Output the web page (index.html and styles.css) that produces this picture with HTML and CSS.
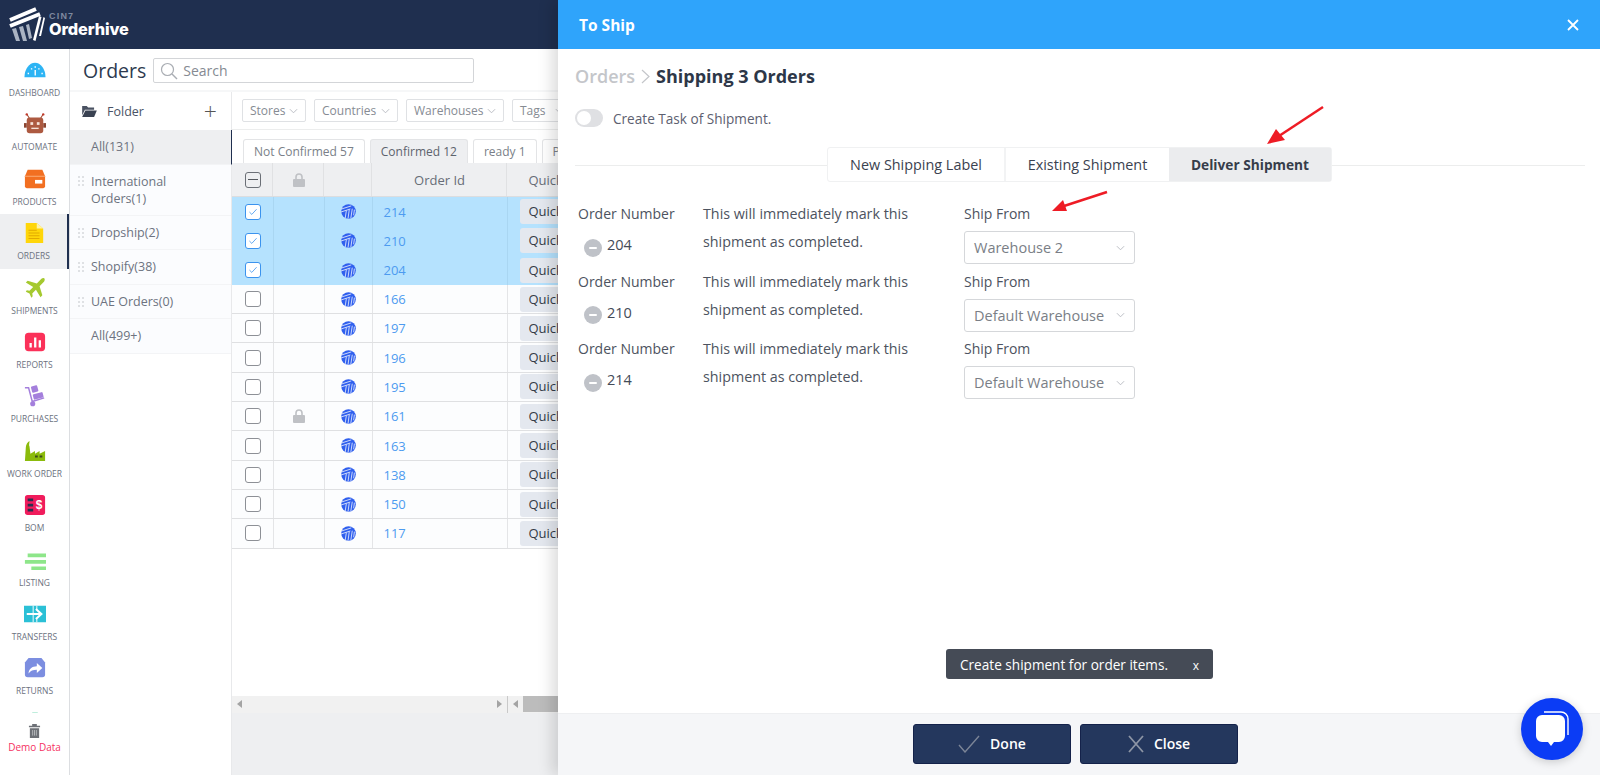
FILE: index.html
```html
<!DOCTYPE html>
<html lang="en">
<head>
<meta charset="utf-8">
<title>Orderhive - To Ship</title>
<link rel="stylesheet" href="styles.css">
</head>
<body>
<svg class="defs" width="0" height="0" aria-hidden="true">
  <symbol id="stripe" viewBox="0 0 16 16">
    <circle cx="8" cy="8" r="7.8" fill="#2f5fee"/>
    <path d="M0 5.500 11 2M0 8.500l10-3.200M4.500 15l1.200-8M7.500 15.500l1.300-9.500M10.500 15l1.500-10M13.500 12l.8-6" fill="none" stroke="#fff" stroke-width=".8"/>
  </symbol>
  <symbol id="chev" viewBox="0 0 10 6"><path d="M1 1l4 4 4-4" fill="none" stroke="#b4b8be" stroke-width="1"/></symbol>
  <symbol id="minus" viewBox="0 0 18 18"><circle cx="9" cy="9" r="9" fill="#bfc2c8"/><rect x="5" y="8" width="8" height="2" rx="1" fill="#fff"/></symbol>
  <symbol id="dots" viewBox="0 0 7 11"><path d="M0 0h2v2H0zM4 0h2v2H4zM0 4h2v2H0zM4 4h2v2H4zM0 8h2v2H0zM4 8h2v2H4z" fill="#dfe1e4"/></symbol>
  <symbol id="tick" viewBox="0 0 12 10"><path d="M1.500 5l3 3 6-6.500" fill="none" stroke="#3b93ee" stroke-width="1"/></symbol>
</svg>

<div class="app">
  <header class="topbar">
    <svg class="logo" viewBox="0 0 36 36" width="36" height="36">
      <path d="M1 13 27 2M1 19 31 7" stroke="#fff" stroke-width="4" fill="none"/>
      <path d="M3 22l4 12h4L7 21zM10 20l4 14h4l-4-15zM17 18l3 14 3-1-3-14z" fill="#aab3c2"/>
      <path d="M24 33 30 9l2.500 1-6 24zM30 29l4.500-19 1.500 1-4 18z" fill="#fff"/>
    </svg>
    <div class="brand"><span class="brand-small">CIN7</span><span class="brand-big">Orderhive</span></div>
  </header>

  <div class="body">
    <nav class="sidebar">
      <div class="nav-scroll">
        <a class="nav-item"><svg viewBox="0 0 24 24" class="nav-icon"><path d="M.5 20A11.500 16 0 0 1 23.500 20z" fill="#2db4f4"/><path d="M4 15h1.500v1.500H4zM7.500 10h1.500v1.500H7.500zM11.500 8H13v1.500h-1.500zM15.500 10H17v1.500h-1.500zM19 15h1.500v1.500H19zM11.500 12H13v6h-1.500z" fill="#fff"/></svg><span>Dashboard</span></a>
        <a class="nav-item"><svg viewBox="0 0 24 24" class="nav-icon"><path d="M6 6 3 1M18 6l3-5" stroke="#a8523a" stroke-width="1.200"/><circle cx="3" cy="1.500" r="1.300" fill="#c0392b"/><circle cx="21" cy="1.500" r="1.300" fill="#c0392b"/><rect x="3" y="5" width="18" height="17" rx="3" fill="#ad5a41"/><rect x="0" y="11" width="3" height="5" fill="#8c4632"/><rect x="21" y="11" width="3" height="5" fill="#8c4632"/><rect x="7" y="10" width="3" height="3" fill="#f6e3da"/><rect x="14" y="10" width="3" height="3" fill="#f6e3da"/><rect x="8" y="16" width="8" height="1.500" fill="#f6e3da"/></svg><span>Automate</span></a>
        <a class="nav-item"><svg viewBox="0 0 24 24" class="nav-icon"><path d="M4 2h16l3 7v11a2 2 0 0 1-2 2H3a2 2 0 0 1-2-2V9z" fill="#f26f21"/><path d="M1 9h22" stroke="#fbb27f" stroke-width="1"/><rect x="12" y="13" width="8" height="4" fill="#fff"/></svg><span>Products</span></a>
        <a class="nav-item nav-item-active"><svg viewBox="0 0 24 24" class="nav-icon"><path d="M3 1h12l7 6v16H3z" fill="#ffd60a"/><path d="M15 1v6h7z" fill="#fff3a8"/><path d="M6 9h9M6 12h12M6 15h12M6 18h12" stroke="#e2a900" stroke-width="1.200"/></svg><span>Orders</span></a>
        <a class="nav-item"><svg viewBox="0 0 24 24" class="nav-icon"><path d="M21 1c2 0 2 2 1 4l-5 5 3 10-2 2-5-8-4 4 .5 3-1.500 1.500-2-4.500-4-2L3 14.500l3 .5 4-4-8-5 2-2 10 3 5-5c.8-.7 1.300-1 2-1z" fill="#a5c92f"/></svg><span>Shipments</span></a>
        <a class="nav-item"><svg viewBox="0 0 24 24" class="nav-icon"><rect x="1" y="2" width="22" height="20" rx="4" fill="#fb3159"/><path d="M6 13h2.500v5H6zM11 7h2.500v11H11zM16 10h2.500v8H16z" fill="#fff"/></svg><span>Reports</span></a>
        <a class="nav-item"><svg viewBox="0 0 24 24" class="nav-icon"><path d="M1 3h4l4 15 13-4" fill="none" stroke="#a47fdc" stroke-width="1.600"/><rect x="8" y="1" width="7" height="7" rx="1" transform="rotate(-15 11 4)" fill="#a47fdc"/><rect x="10" y="9" width="11" height="6" rx="1" transform="rotate(-15 15 12)" fill="#a47fdc"/><circle cx="9.500" cy="20.500" r="2.800" fill="#a47fdc"/></svg><span>Purchases</span></a>
        <a class="nav-item"><svg viewBox="0 0 24 24" class="nav-icon"><path d="M1 23 2 8c0-3 2-6 4-7 0 3-1 4 0 6l1 8 5-3v3l5-3v3l6-3v11z" fill="#8bbb0c"/><path d="M12 17h3v2h-3zM17 17h3v2h-3z" fill="#3c4d1c"/></svg><span>Work Order</span></a>
        <a class="nav-item"><svg viewBox="0 0 24 24" class="nav-icon"><rect x="1" y="1" width="22" height="22" rx="3" fill="#f01c5c"/><path d="M4 5h6v3H4zM4 10.500h6v3H4zM4 16h6v3H4z" fill="#2a2f4f"/><text x="16.500" y="16.500" class="bom-sign">$</text></svg><span>BOM</span></a>
        <a class="nav-item"><svg viewBox="0 0 24 24" class="nav-icon"><path d="M4 5h20v4H4zM1 12h23v4H1zM8 19h16v4H8z" fill="#8ee68a"/></svg><span>Listing</span></a>
        <a class="nav-item"><svg viewBox="0 0 24 24" class="nav-icon"><rect y="3" width="24" height="18" fill="#2bc0d6"/><path d="M10 3v18M14 3v4M14 17v4" stroke="#fff" stroke-width="1"/><path d="M3 12h15M13 6.500l6 5.500-6 5.500" fill="none" stroke="#fff" stroke-width="2.200"/></svg><span>Transfers</span></a>
        <a class="nav-item"><svg viewBox="0 0 24 24" class="nav-icon"><path d="M5 1h14l4 5v13a3 3 0 0 1-3 3H4a3 3 0 0 1-3-3V6z" fill="#7c8ee0"/><path d="M5 18c0-5 4-8 9-8V6.500l6 5.500-6 5.500V14c-4 0-7 1-9 4z" fill="#fff"/></svg><span>Returns</span></a>
        <a class="nav-item"><svg viewBox="0 0 24 24" class="nav-icon"><path d="M9 0h6v24H9z" fill="#bfeedd"/></svg></a>
      </div>
      <a class="demo">
        <svg viewBox="0 0 14 16" width="13" height="15"><path d="M1 3h12v1.500H1zM4.500 1h5v2h-5zM2 5.500h10V16H2z" fill="#6d7076"/><path d="M5 7.500v6M7 7.500v6M9 7.500v6" stroke="#c8cacd" stroke-width=".8"/></svg>
        <span>Demo Data</span>
      </a>
    </nav>

    <main class="main">
      <div class="page-head">
        <h1>Orders</h1>
        <div class="search">
          <svg viewBox="0 0 18 18" width="18" height="18"><circle cx="7.500" cy="7.500" r="6" fill="none" stroke="#a9adb3" stroke-width="1.200"/><path d="M12 12l5 5" stroke="#a9adb3" stroke-width="1.400"/></svg>
          <span>Search</span>
        </div>
      </div>
      <div class="workspace">
        <aside class="folders">
          <div class="folder-head">
            <svg viewBox="0 0 16 12" width="15" height="11"><path d="M0 0h5l1.500 1.500H13V4H3L0 10z" fill="#4a5262"/><path d="M3.500 5H16l-3 7H0z" fill="#3a4252"/></svg>
            <span class="folder-title">Folder</span>
            <span class="folder-add">+</span>
          </div>
          <div class="folder folder-active">All(131)</div>
          <div class="folder folder-tall"><svg class="grip"><use href="#dots"/></svg>International Orders(1)</div>
          <div class="folder"><svg class="grip"><use href="#dots"/></svg>Dropship(2)</div>
          <div class="folder"><svg class="grip"><use href="#dots"/></svg>Shopify(38)</div>
          <div class="folder"><svg class="grip"><use href="#dots"/></svg>UAE Orders(0)</div>
          <div class="folder">All(499+)</div>
        </aside>
        <section class="content">
          <div class="filters">
            <span class="filter filter-stores">Stores<svg class="chev"><use href="#chev"/></svg></span>
            <span class="filter filter-countries">Countries<svg class="chev"><use href="#chev"/></svg></span>
            <span class="filter filter-warehouses">Warehouses<svg class="chev"><use href="#chev"/></svg></span>
            <span class="filter filter-tags">Tags<svg class="chev"><use href="#chev"/></svg></span>
          </div>
          <div class="status-tabs">
            <span class="status-tab">Not Confirmed 57</span>
            <span class="status-tab status-tab-active">Confirmed 12</span>
            <span class="status-tab">ready 1</span>
            <span class="status-tab status-tab-cut">P</span>
          </div>
          <div class="grid">
            <div class="row row-head">
              <div class="cell c-check"><span class="box box-mixed"></span></div>
              <div class="cell c-lock"><svg viewBox="0 0 12 14" width="12" height="14"><path d="M3 6V4a3 3 0 0 1 6 0v2" fill="none" stroke="#bfc1c5" stroke-width="1.600"/><rect y="6" width="12" height="8" rx="1" fill="#bfc1c5"/></svg></div>
              <div class="cell c-chan"></div>
              <div class="cell c-id">Order Id</div>
              <div class="cell c-quick">Quick</div>
            </div>
            <div class="row row-sel"><div class="cell c-check"><span class="box box-on"><svg class="tick"><use href="#tick"/></svg></span></div><div class="cell c-lock"></div><div class="cell c-chan"><svg class="chan"><use href="#stripe"/></svg></div><div class="cell c-id c-link">214</div><div class="cell c-quick"><span class="quick">Quick</span></div></div>
            <div class="row row-sel"><div class="cell c-check"><span class="box box-on"><svg class="tick"><use href="#tick"/></svg></span></div><div class="cell c-lock"></div><div class="cell c-chan"><svg class="chan"><use href="#stripe"/></svg></div><div class="cell c-id c-link">210</div><div class="cell c-quick"><span class="quick">Quick</span></div></div>
            <div class="row row-sel"><div class="cell c-check"><span class="box box-on"><svg class="tick"><use href="#tick"/></svg></span></div><div class="cell c-lock"></div><div class="cell c-chan"><svg class="chan"><use href="#stripe"/></svg></div><div class="cell c-id c-link">204</div><div class="cell c-quick"><span class="quick">Quick</span></div></div>
            <div class="row"><div class="cell c-check"><span class="box"></span></div><div class="cell c-lock"></div><div class="cell c-chan"><svg class="chan"><use href="#stripe"/></svg></div><div class="cell c-id c-link">166</div><div class="cell c-quick"><span class="quick">Quick</span></div></div>
            <div class="row"><div class="cell c-check"><span class="box"></span></div><div class="cell c-lock"></div><div class="cell c-chan"><svg class="chan"><use href="#stripe"/></svg></div><div class="cell c-id c-link">197</div><div class="cell c-quick"><span class="quick">Quick</span></div></div>
            <div class="row"><div class="cell c-check"><span class="box"></span></div><div class="cell c-lock"></div><div class="cell c-chan"><svg class="chan"><use href="#stripe"/></svg></div><div class="cell c-id c-link">196</div><div class="cell c-quick"><span class="quick">Quick</span></div></div>
            <div class="row"><div class="cell c-check"><span class="box"></span></div><div class="cell c-lock"></div><div class="cell c-chan"><svg class="chan"><use href="#stripe"/></svg></div><div class="cell c-id c-link">195</div><div class="cell c-quick"><span class="quick">Quick</span></div></div>
            <div class="row"><div class="cell c-check"><span class="box"></span></div><div class="cell c-lock"><svg viewBox="0 0 12 14" width="12" height="14"><path d="M3 6V4a3 3 0 0 1 6 0v2" fill="none" stroke="#bfc1c5" stroke-width="1.600"/><rect y="6" width="12" height="8" rx="1" fill="#bfc1c5"/></svg></div><div class="cell c-chan"><svg class="chan"><use href="#stripe"/></svg></div><div class="cell c-id c-link">161</div><div class="cell c-quick"><span class="quick">Quick</span></div></div>
            <div class="row"><div class="cell c-check"><span class="box"></span></div><div class="cell c-lock"></div><div class="cell c-chan"><svg class="chan"><use href="#stripe"/></svg></div><div class="cell c-id c-link">163</div><div class="cell c-quick"><span class="quick">Quick</span></div></div>
            <div class="row"><div class="cell c-check"><span class="box"></span></div><div class="cell c-lock"></div><div class="cell c-chan"><svg class="chan"><use href="#stripe"/></svg></div><div class="cell c-id c-link">138</div><div class="cell c-quick"><span class="quick">Quick</span></div></div>
            <div class="row"><div class="cell c-check"><span class="box"></span></div><div class="cell c-lock"></div><div class="cell c-chan"><svg class="chan"><use href="#stripe"/></svg></div><div class="cell c-id c-link">150</div><div class="cell c-quick"><span class="quick">Quick</span></div></div>
            <div class="row"><div class="cell c-check"><span class="box"></span></div><div class="cell c-lock"></div><div class="cell c-chan"><svg class="chan"><use href="#stripe"/></svg></div><div class="cell c-id c-link">117</div><div class="cell c-quick"><span class="quick">Quick</span></div></div>
          </div>
          <div class="grid-fill"></div>
          <div class="scrollbars">
            <div class="scroll scroll-left"><i class="arrow-l"></i><i class="arrow-r"></i></div>
            <div class="scroll scroll-right"><i class="arrow-l"></i><b class="thumb"></b></div>
          </div>
          <div class="content-foot"></div>
        </section>
      </div>
    </main>
  </div>
</div>

<aside class="panel">
  <header class="panel-head">
    <span>To Ship</span>
    <svg viewBox="0 0 12 12" width="12" height="12"><path d="M1 1l10 10M11 1 1 11" stroke="#fff" stroke-width="1.800"/></svg>
  </header>
  <div class="panel-body">
    <div class="crumbs">
      <span class="crumb-dim">Orders</span>
      <svg viewBox="0 0 9 15" width="9" height="15"><path d="M1 1l7 6.500L1 14" fill="none" stroke="#c4c6ca" stroke-width="1.200"/></svg>
      <span class="crumb-now">Shipping 3 Orders</span>
    </div>
    <div class="task"><span class="toggle"></span><span>Create Task of Shipment.</span></div>
    <div class="tabs-wrap">
      <div class="tabs">
        <span class="tab tab-1">New Shipping Label</span>
        <span class="tab tab-2">Existing Shipment</span>
        <span class="tab tab-3">Deliver Shipment</span>
      </div>
    </div>
    <div class="ship-list">
      <div class="ship-row">
        <div class="ship-order"><div>Order Number</div><div class="ship-num"><svg class="minus"><use href="#minus"/></svg>204</div></div>
        <div class="ship-note">This will immediately mark this shipment as completed.</div>
        <div class="ship-from"><div>Ship From</div><div class="select">Warehouse 2<svg class="chev"><use href="#chev"/></svg></div></div>
      </div>
      <div class="ship-row">
        <div class="ship-order"><div>Order Number</div><div class="ship-num"><svg class="minus"><use href="#minus"/></svg>210</div></div>
        <div class="ship-note">This will immediately mark this shipment as completed.</div>
        <div class="ship-from"><div>Ship From</div><div class="select">Default Warehouse<svg class="chev"><use href="#chev"/></svg></div></div>
      </div>
      <div class="ship-row">
        <div class="ship-order"><div>Order Number</div><div class="ship-num"><svg class="minus"><use href="#minus"/></svg>214</div></div>
        <div class="ship-note">This will immediately mark this shipment as completed.</div>
        <div class="ship-from"><div>Ship From</div><div class="select">Default Warehouse<svg class="chev"><use href="#chev"/></svg></div></div>
      </div>
    </div>
  </div>
  <footer class="panel-foot">
    <button class="btn"><svg viewBox="0 0 22 18" width="22" height="18"><path d="M1 10l6 7L21 1" fill="none" stroke="#7c8597" stroke-width="1.400"/></svg>Done</button>
    <button class="btn"><svg viewBox="0 0 16 18" width="16" height="18"><path d="M1 1l14 16M15 1 1 17" fill="none" stroke="#8d95a5" stroke-width="1.800"/></svg>Close</button>
  </footer>
  <div class="toast"><span>Create shipment for order items.</span><span class="toast-x">x</span></div>
</aside>

<svg class="arrow arrow-tab" viewBox="0 0 60 42" width="60" height="42"><path d="M58 2 14 31" stroke="#ee1c25" stroke-width="2.500"/><path d="M2 39l9-15 9 11z" fill="#ee1c25"/></svg>
<svg class="arrow arrow-from" viewBox="0 0 60 24" width="60" height="24"><path d="M57 2 14 16" stroke="#ee1c25" stroke-width="2.500"/><path d="M2 21l11-11 4 11z" fill="#ee1c25"/></svg>

<button class="chat" aria-label="Chat">
  <svg viewBox="0 0 34 36" width="34" height="36"><path d="M9 1h17a7 7 0 0 1 7 7v16" fill="none" stroke="#fff" stroke-width="1.400"/><path d="M7 4h17a6 6 0 0 1 6 6v15a6 6 0 0 1-6 6h-5l-3 4-3-4H7a6 6 0 0 1-6-6V10a6 6 0 0 1 6-6z" fill="#fff"/></svg>
</button>
</body>
</html>
```

FILE: styles.css
```css
* { box-sizing: border-box; }
html, body { margin: 0; height: 100%; }
body {
  overflow: hidden;
  font-family: "Open Sans", "Noto Sans", sans-serif;
  font-size: 13px;
  color: #5d6472;
  background: #fff;
}
.defs { position: absolute; }
.app { display: flex; flex-direction: column; height: 775px; }

/* top bar */
.topbar {
  flex: 0 0 49px;
  display: flex;
  align-items: center;
  gap: 4px;
  padding-left: 9px;
  background: #1f2f4f;
}
.brand { display: flex; flex-direction: column; color: #fff; line-height: 1; }
.brand-small { font: 700 9px/9px "Liberation Sans", sans-serif; color: #7f8aa0; letter-spacing: 1.200px; }
.brand-big { font: 800 16.300px/17px "Inter", sans-serif; letter-spacing: -.1px; }

.body { flex: 1; display: flex; min-height: 0; }

/* sidebar */
.sidebar {
  flex: 0 0 70px;
  position: relative;
  border-right: 1px solid #dcdee1;
  display: flex;
  flex-direction: column;
}
.nav-scroll { flex: 0 0 664px; padding-top: 2px; overflow: hidden; }
.nav-item {
  display: flex;
  flex-direction: column;
  align-items: center;
  height: 54.400px;
  padding-top: 8px;
  font-size: 8.500px;
  line-height: 12px;
  text-transform: uppercase;
  color: #6c7280;
  white-space: nowrap;
}
.nav-icon { width: 22px; height: 22px; margin-bottom: 6px; flex: none; }
.nav-item-active { background: #eeeff1; border-right: 2px solid #1f2f4f; }
.bom-sign { font: 700 13px "Liberation Sans", sans-serif; fill: #fff; text-anchor: middle; }
.demo {
  display: flex;
  flex-direction: column;
  align-items: center;
  gap: 3px;
  padding-top: 10px;
  font-size: 10px;
  line-height: 13px;
  color: #f5315f;
}

/* main */
.main { flex: 1; display: flex; flex-direction: column; min-width: 0; }
.page-head {
  flex: 0 0 43px;
  display: flex;
  align-items: center;
  gap: 7px;
  padding: 2px 0 0 13px;
  border-bottom: 2px solid #f6f7f8;
}
.page-head h1 { margin: 0; font-size: 19.500px; font-weight: 400; color: #2d3a4f; }
.search {
  display: flex;
  align-items: center;
  gap: 5px;
  width: 321px;
  height: 25px;
  padding-left: 6px;
  border: 1px solid #d3d5d8;
  border-radius: 2px;
  font-size: 14px;
  color: #858a92;
}
.workspace { flex: 1; display: flex; min-height: 0; }

/* folders */
.folders { flex: 0 0 162px; border-right: 1px solid #e8e9eb; }
.folder-head {
  display: flex;
  align-items: center;
  height: 38px;
  padding: 0 14px 0 12px;
  color: #4a5466;
}
.folder-title { margin-left: 10px; flex: 1; font-size: 12.500px; }
.folder-add { font-size: 23px; font-weight: 300; line-height: 1; color: #555; }
.folder {
  position: relative;
  display: flex;
  align-items: center;
  height: 34.500px;
  padding: 0 10px 0 21px;
  background: #fbfcfe;
  border-bottom: 1px solid #f3f4f6;
  font-size: 12.500px;
  line-height: 17px;
  color: #6d7380;
}
.folder-tall { height: 51px; }
.folder-active { background: #eeeff1; border-right: 1px solid #1f2f4f; margin-right: -1px; }
.grip { position: absolute; left: 8px; top: 12px; width: 7px; height: 11px; }
.folder-tall .grip { top: 11px; }

/* content */
.content { flex: 1; min-width: 0; display: flex; flex-direction: column; overflow: hidden; }
.filters {
  flex: 0 0 38px;
  display: flex;
  align-items: center;
  gap: 8px;
  padding: 0 0 0 10px;
  border-bottom: 1px solid #eceded;
}
.filter {
  display: flex;
  align-items: center;
  justify-content: space-between;
  flex: none;
  height: 23px;
  padding: 0 7px;
  border: 1px solid #dfe1e4;
  border-radius: 2px;
  font-size: 12px;
  color: #868b93;
}
.filter-stores { width: 64px; }
.filter-countries { width: 84px; }
.filter-warehouses { width: 98px; }
.filter-tags { width: 60px; }
.chev { width: 9px; height: 6px; flex: none; }
.status-tabs {
  flex: 0 0 33px;
  display: flex;
  align-items: flex-end;
  gap: 5px;
  padding-left: 11px;
}
.status-tab {
  flex: none;
  height: 24px;
  padding: 0 10px;
  line-height: 24px;
  border: 1px solid #e3e4e6;
  border-bottom: 0;
  border-radius: 3px 3px 0 0;
  font-size: 12px;
  color: #7a7f88;
}
.status-tab-active { background: #eeeff1; color: #5d636d; }
.status-tab-cut { width: 60px; }

/* table */
.grid { flex: none; }
.row { display: flex; height: 29.300px; border-bottom: 1px solid #dfe0e2; background: #fcfdfe; }
.row-head { height: 34px; background: #eeeff1; border-bottom: 1px solid #dcdddf; color: #676d77; }
.row-sel { background: #b5e2fe; border-bottom: 0; }
.cell { flex: none; display: flex; align-items: center; border-right: 1px solid #e4e5e7; }
.row-sel .cell { border-right-color: #a9d6f2; }
.row-head .cell { justify-content: center; border-right-color: transparent; box-shadow: inset -1px 0 0 0 #e0e1e3; }
.c-check { width: 41.500px; padding-left: 13px; justify-content: flex-start !important; }
.c-lock { width: 51px; justify-content: center; }
.c-chan { width: 48px; justify-content: center; }
.c-id { width: 135px; font-size: 13px; }
.c-link { padding-left: 11px; color: #4d9bf0; }
.c-quick { width: 300px; padding-left: 12px; border-right: 0; justify-content: flex-start !important; white-space: nowrap; box-shadow: none !important; }
.row-head .c-quick { padding-left: 21px; }
.quick { display: block; height: 25px; width: 120px; padding-left: 9px; line-height: 25px; background: #e4e8ef; border-radius: 3px; color: #333b47; }
.box {
  display: flex;
  align-items: center;
  justify-content: center;
  width: 16px;
  height: 16px;
  border: 1px solid #8d9096;
  border-radius: 3px;
  background: #fff;
}
.box-on { border-color: #3b93ee; }
.box-mixed { background: transparent; border-color: #6b6f76; }
.box-mixed::before { content: ""; width: 10px; height: 1px; background: #55595f; }
.tick { width: 10px; height: 8px; }
.chan { width: 15px; height: 15px; }
.grid-fill { flex: 0 0 147px; }
.scrollbars { flex: 0 0 17px; display: flex; background: #f1f1f1; }
.scroll { display: flex; align-items: center; justify-content: space-between; padding: 0 5px; }
.scroll-left { width: 276px; border-right: 1px solid #c9c9c9; }
.scroll-right { flex: 1; justify-content: flex-start; gap: 5px; }
.arrow-l { border: 4px solid transparent; border-right: 5px solid #a4a4a4; border-left: 0; }
.arrow-r { border: 4px solid transparent; border-left: 5px solid #a4a4a4; border-right: 0; }
.thumb { width: 60px; height: 16px; background: #bcbcbc; }
.content-foot { flex: 1; background: #eeeff1; }

/* slide-over panel */
.panel {
  position: absolute;
  top: 0; right: 0; bottom: 0;
  left: 558px;
  display: flex;
  flex-direction: column;
  background: #fff;
  box-shadow: -6px 0 14px rgba(0, 0, 0, .14);
}
.panel-head {
  flex: 0 0 49px;
  display: flex;
  align-items: center;
  justify-content: space-between;
  padding: 0 21px;
  background: #2fa4fb;
  color: #fff;
  font-size: 15.500px;
  font-weight: 700;
}
.panel-body { flex: 1; padding: 0 15px 0 17px; color: #4d5360; font-size: 14px; }
.crumbs { display: flex; align-items: center; gap: 6px; height: 54px; font-size: 18px; font-weight: 600; }
.crumb-dim { color: #c4c6ca; }
.crumb-now { font-weight: 700; color: #2d3748; }
.task { display: flex; align-items: center; gap: 10px; height: 30px; font-size: 13.600px; color: #5d6070; }
.toggle {
  position: relative;
  width: 28px;
  height: 18px;
  border-radius: 9px;
  background: #dfe0e3;
}
.toggle::before {
  content: "";
  position: absolute;
  left: 2px; top: 2px;
  width: 14px; height: 14px;
  border-radius: 50%;
  background: #fff;
}
.tabs-wrap {
  position: relative;
  display: flex;
  justify-content: flex-start;
  margin-top: 14px;
  padding-left: 252px;
}
.tabs-wrap::before {
  content: "";
  position: absolute;
  left: 0; right: 0; top: 18px;
  height: 1px;
  background: #eceded;
}
.tabs {
  position: relative;
  display: flex;
  height: 35px;
  background: #fff;
  border: 1px solid #f0f1f2;
  border-radius: 3px;
  font-size: 14.400px;
  color: #3b4250;
}
.tab { display: flex; align-items: center; justify-content: center; white-space: nowrap; }
.tab-1 { width: 178px; border-right: 2px solid #f2f3f4; }
.tab-2 { width: 163px; }
.tab-3 { width: 162px; background: #ebecee; font-size: 13.700px; font-weight: 700; color: #363d4a; }
.ship-list { padding: 16px 0 0 3px; }
.ship-row { display: flex; height: 67.500px; }
.ship-order { flex: 0 0 125px; }
.ship-order > div:first-child, .ship-from > div:first-child { height: 31px; line-height: 31px; }
.ship-num { display: flex; align-items: center; gap: 5px; padding-left: 6px; height: 31px; font-size: 14.500px; color: #444b58; }
.minus { width: 18px; height: 18px; margin-top: 6px; }
.ship-note { flex: 0 0 261px; width: 261px; padding: 2px 35px 0 0; font-size: 14.300px; line-height: 28px; }
.ship-from { flex: 0 0 171px; }
.select {
  display: flex;
  align-items: center;
  justify-content: space-between;
  height: 33px;
  margin-top: 2px;
  padding: 0 9px;
  border: 1px solid #d5d7da;
  border-radius: 3px;
  font-size: 14.500px;
  color: #7a7e86;
  white-space: nowrap;
}
.panel-foot {
  flex: 0 0 62px;
  display: flex;
  align-items: center;
  justify-content: flex-start;
  gap: 9px;
  padding: 0 0 2px 355px;
  background: #f5f6f8;
  border-top: 1px solid #eeeff1;
}
.btn {
  display: flex;
  align-items: center;
  justify-content: center;
  gap: 10px;
  width: 158px;
  height: 40px;
  padding: 0;
  border: 1px solid #14224a;
  border-radius: 3px;
  background: #24375d;
  color: #fff;
  font: 600 14px "Open Sans", sans-serif;
}
.toast {
  position: absolute;
  left: 388px;
  top: 649px;
  display: flex;
  align-items: center;
  justify-content: space-between;
  width: 267px;
  height: 30px;
  padding: 0 14px;
  border-radius: 3px;
  background: #454b56;
  color: #fff;
  font-size: 13.600px;
}
.toast-x { font-size: 12px; margin-top: 3px; }

/* annotations */
.arrow { position: absolute; }
.arrow-tab { left: 1265px; top: 105px; }
.arrow-from { left: 1050px; top: 190px; }

/* chat launcher */
.chat {
  position: absolute;
  left: 1521px;
  top: 698px;
  display: flex;
  align-items: center;
  justify-content: center;
  width: 62px;
  height: 62px;
  padding: 0;
  border: 0;
  border-radius: 50%;
  background: #0b3cf5;
  box-shadow: 0 2px 10px rgba(0, 0, 0, .18);
}
```
